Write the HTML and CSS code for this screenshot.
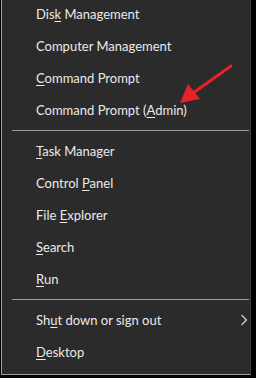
FILE: index.html
```html
<!DOCTYPE html>
<html lang="en">
<head>
    <meta charset="UTF-8">
    <title>Power User Menu</title>
    <link rel="stylesheet" href="styles.css">
</head>
<body>
    <div class="menu">
        <ul class="group first">
            <li class="item"><span>Dis<u>k</u> Management</span></li>
            <li class="item"><span>Computer Management</span></li>
            <li class="item"><span><u>C</u>ommand Prompt</span></li>
            <li class="item"><span>Command Prompt (<u>A</u>dmin)</span></li>
        </ul>
        <div class="separator"></div>
        <ul class="group">
            <li class="item"><span><u>T</u>ask Manager</span></li>
            <li class="item"><span>Control <u>P</u>anel</span></li>
            <li class="item"><span>File <u>E</u>xplorer</span></li>
            <li class="item"><span><u>S</u>earch</span></li>
            <li class="item"><span><u>R</u>un</span></li>
        </ul>
        <div class="separator"></div>
        <ul class="group">
            <li class="item has-sub"><span>Sh<u>u</u>t down or sign out</span>
                <svg class="chevron" width="8" height="12" viewBox="0 0 8 12">
                    <path d="M1.5 1 L6.5 6 L1.5 11" fill="none" stroke="#cfcfcf" stroke-width="1.3"/>
                </svg>
            </li>
            <li class="item"><span><u>D</u>esktop</span></li>
        </ul>

        <!-- red callout arrow -->
        <svg class="arrow" width="60" height="44" viewBox="0 0 60 44">
            <line x1="54" y1="3" x2="16" y2="30" stroke="#e8202a" stroke-width="3" stroke-linecap="round"/>
            <polygon points="3,40 11,21 23,36" fill="#e8202a"/>
        </svg>
    </div>
</body>
</html>
```

FILE: styles.css
```css
* {
    margin: 0;
    padding: 0;
    box-sizing: border-box;
}

body {
    background: #000;
    font-family: 'Lato', 'Open Sans', sans-serif;
    width: 256px;
    height: 378px;
    overflow: hidden;
}

.menu {
    position: relative;
    margin-left: 1px;
    width: 250px;
    height: 377px;
    background: #2b2b2b;
    border-left: 1px solid #a0a0a0;
    border-bottom: 1px solid #a0a0a0;
    border-right: 1px solid #3e3e3e;
}

.group {
    list-style: none;
}

.group.first {
    margin-top: -2px;
}

.item {
    display: flex;
    align-items: center;
    height: 32px;
    padding-left: 34px;
    color: #eaeaea;
    font-size: 13px;
    white-space: nowrap;
}

.item u {
    text-underline-offset: 2px;
}

.has-sub {
    justify-content: space-between;
    padding-right: 2px;
}

.separator {
    height: 1px;
    margin: 4px 1px 4px 10px;
    background: #9a9a9a;
}

.arrow {
    position: absolute;
    left: 175px;
    top: 65px;
}
```
